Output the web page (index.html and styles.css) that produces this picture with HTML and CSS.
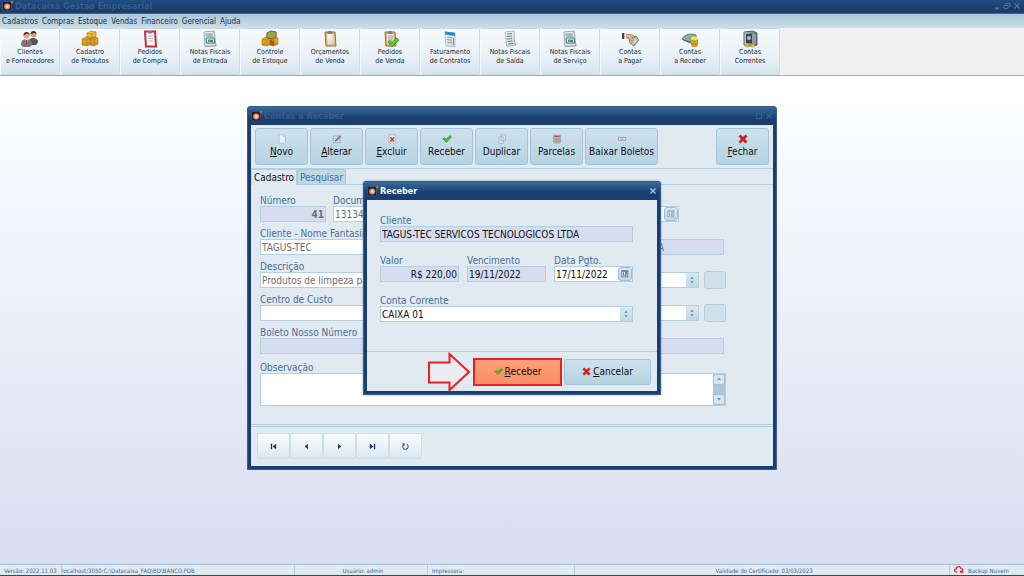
FILE: index.html
```html
<!DOCTYPE html>
<html lang="pt-BR">
<head>
<meta charset="utf-8">
<title>Datacaixa Gestão Empresarial</title>
<link rel="stylesheet" href="styles.css">
</head>
<body>
<svg class="defs" aria-hidden="true">
  <defs>
    <linearGradient id="gold" x1="0" y1="0" x2="0" y2="1"><stop offset="0" stop-color="#f6cf4e"/><stop offset="1" stop-color="#c98a12"/></linearGradient>
    <linearGradient id="paper" x1="0" y1="0" x2="1" y2="1"><stop offset="0" stop-color="#ffffff"/><stop offset="1" stop-color="#c3ccd2"/></linearGradient>
    <linearGradient id="steel" x1="0" y1="0" x2="1" y2="0"><stop offset="0" stop-color="#c2cdd2"/><stop offset="1" stop-color="#5c6a70"/></linearGradient>
    <symbol id="logo" viewBox="0 0 12 12"><rect x="0.500" y="1.500" width="9" height="9.500" rx="1" fill="#16233f" stroke="#35506f"/><circle cx="5.200" cy="6.500" r="3" fill="#f58a4a"/><circle cx="5.200" cy="6.500" r="1.500" fill="#ffe3cf"/><circle cx="10" cy="2" r="1.300" fill="#e2632c"/></symbol>
    <symbol id="check" viewBox="0 0 12 12"><path d="M1 6l2.500-1.500 1.500 1.700L9.500 2 11.500 3.500 5.300 10z" fill="#4fc320" stroke="#258a10" stroke-width=".8"/></symbol>
    <symbol id="cross" viewBox="0 0 12 12"><path d="M1 3l2-2 3 3 3-3 2 2-3 3 3 3-2 2-3-3-3 3-2-2 3-3z" fill="#d81f12" stroke="#a3130b" stroke-width=".5"/></symbol>
    <symbol id="boxes" viewBox="0 0 18 18"><path d="M6 3l4-2 5 1v5l-4 2-5-1zM1 9l4-2 5 1v6l-4 2-5-1zM9 9l4-2 4 1v6l-4 2-4-1z" fill="url(#gold)" stroke="#a8761a" stroke-width=".6"/><path d="M6 3l5 1 4-2M11 4v5M1 9l5 1 4-2M6 10v6M9 9l4 1 4-2M13 10v6" fill="none" stroke="#b88518" stroke-width=".7"/></symbol>
    <symbol id="invoice" viewBox="0 0 18 18"><path d="M3 2l10-1 2 15-11 .5z" fill="url(#paper)" stroke="#7e919b" stroke-width=".8"/><path d="M4.500 4h7M4.800 6h7" stroke="#71868f"/><path d="M5 8h8l.5 5H5.500z" fill="#fff" stroke="#40708c"/><path d="M6.500 9.500h5.500v2.500H7z" fill="#49a85f"/><path d="M9 11.500h3" stroke="#cf3d3d"/></symbol>
    <symbol id="clip" viewBox="0 0 18 18"><path d="M4 2h10l1 14H5z" fill="#e4b35c" stroke="#9d7129"/><path d="M6 4h6.500l.7 10.500H6.500z" fill="url(#paper)"/><path d="M7 1h4l.5 3h-5z" fill="#807e7a"/></symbol>
    <symbol id="updown" viewBox="0 0 8 10"><path d="M4 1l2 2.500H2zM4 9L2 6.500h4z" fill="#3e6791"/></symbol>
    <symbol id="calendar" viewBox="0 0 10 10"><rect x="1" y="1" width="7.500" height="7.500" fill="#e8eef4" stroke="#53748f"/><path d="M3 3v4M5 3h2v2H5v2h2M1 1.500h8" fill="none" stroke="#3b5878"/></symbol>
    <symbol id="close" viewBox="0 0 8 8"><path d="M1.500 1.500l5 5M6.500 1.500l-5 5" stroke="currentColor" stroke-width="1.300"/></symbol>
  </defs>
</svg>

<header class="app-title">
  <svg class="logo"><use href="#logo"/></svg>
  <h1>Datacaixa Gestão Empresarial</h1>
  <div class="win-controls">
    <button aria-label="Minimizar"><svg viewBox="0 0 8 8"><path d="M2 6.500h4" stroke="currentColor" stroke-width="2"/></svg></button>
    <button aria-label="Restaurar"><svg viewBox="0 0 8 8"><path d="M1 3.500h4v3H1zM3 3V1.500h4v3H5.500" fill="none" stroke="currentColor"/></svg></button>
    <button aria-label="Fechar aplicativo"><svg viewBox="0 0 8 8"><use href="#close"/></svg></button>
  </div>
</header>
<nav class="menu">
  <button>Cadastros</button><button>Compras</button><button>Estoque</button><button>Vendas</button><button>Financeiro</button><button>Gerencial</button><button>Ajuda</button>
</nav>
<div class="ribbon">
  <button><svg viewBox="0 0 18 18"><path d="M7 13c1-4 3-5 5-5s5 1 5 4l-2 3H8z" fill="#555"/><circle cx="12.500" cy="4.500" r="3" fill="#dc9c78"/><path d="M9.500 4c0-4 6-4 6 0l-2-1z" fill="#3a2e29"/><path d="M0 15c0-4 2-6 5.500-6s5.500 2 5.500 6l-2 2H2z" fill="#777"/><path d="M4.500 9l1 4 1.500-4z" fill="#fff"/><path d="M5.500 10v4" stroke="#c33"/><circle cx="5.500" cy="5.500" r="3" fill="#e2a582"/><path d="M2.500 5.500C2 1 9 1 8.500 5L6 3.500z" fill="#42332c"/></svg>Clientes<br>e Fornecedores</button>
  <button><svg><use href="#boxes"/></svg>Cadastro<br>de Produtos</button>
  <button><svg viewBox="0 0 18 18"><path d="M4 1.500h10l1 15H5z" fill="#fff" stroke="#c52c38" stroke-width="2"/><path d="M7 1h4v2.500H7z" fill="#777"/><path d="M7 6h5M7 8.500h5M7.500 11h4" stroke="#a9adb2"/></svg>Pedidos<br>de Compra</button>
  <button><svg><use href="#invoice"/></svg>Notas Fiscais<br>de Entrada</button>
  <button><svg viewBox="0 0 18 18"><use href="#boxes"/><path d="M6 3l4-2 5 1v5l-4 2-5-1z" fill="#a3a345" stroke="#70732c"/><path d="M9 10l4 1v5l-4-1z" fill="#bd4c20"/></svg>Controle<br>de Estoque</button>
  <button><svg><use href="#clip"/></svg>Orçamentos<br>de Venda</button>
  <button><svg viewBox="0 0 18 18"><use href="#clip"/><path d="M7 6h5M7 8h5M7 10h4" stroke="#989da0"/><path d="M7 12l2-1.500 2 2L15.500 8 18 10l-7 7z" fill="#5bcc27" stroke="#268616" stroke-width=".7"/></svg>Pedidos<br>de Venda</button>
  <button><svg viewBox="0 0 18 18"><path d="M4 2l10 1v14l-9-1z" fill="url(#paper)" stroke="#a4b2bb" stroke-width=".7"/><path d="M4 1.500l10 1.300V6L4 4.500z" fill="#278acb"/><path d="M6 7l5 .7M6 9.500l5 .7M6 12l5 .7M12.500 8v7" stroke="#8d9ca6"/></svg>Faturamento<br>de Contratos</button>
  <button><svg viewBox="0 0 18 18"><path d="M4 2l9-1c1 5-1 9 2 14l-9 1.500c-2-5 0-9-2-14.500z" fill="url(#paper)" stroke="#8fa1a5" stroke-width=".7"/><path d="M6 4l5-.5M6 6.500l5-.5M6 9l5-.5M6.500 11.500l5-.5M7 14l5-.5" stroke="#568579"/></svg>Notas Fiscais<br>de Saída</button>
  <button><svg><use href="#invoice"/></svg>Notas Fiscais<br>de Serviço</button>
  <button><svg viewBox="0 0 18 18"><path d="M8 8l7-2 3 4-5 6-4-3z" fill="#b1c0a5" stroke="#758a6c"/><circle cx="13" cy="10.500" r="2" fill="#e0e6d5"/><path d="M4 4l8 1 2 3-3-.5 2 3-2 1-3-3-4-1z" fill="#e3ac8c" stroke="#a66c52" stroke-width=".6"/><path d="M1 3h2.500v6H1z" fill="#444"/><path d="M3.500 3.500h1.500v5H3.500z" fill="#eee"/></svg>Contas<br>a Pagar</button>
  <button><svg viewBox="0 0 18 18"><path d="M1 9c3-5 9-6 14-4v6l-6 2z" fill="#8faa90" stroke="#5d7f6b"/><path d="M2 10l7 2 5-3" fill="none" stroke="#526f5d"/><path d="M10 8v7c0 2.500 7 2.500 7 0V8z" fill="url(#gold)"/><ellipse cx="13.500" cy="8" rx="3.500" ry="1.500" fill="#ffe25e"/><path d="M10 10.500q3.500 2 7 0M10 13q3.500 2 7 0" fill="none" stroke="#b98911"/></svg>Contas<br>a Receber</button>
  <button><svg viewBox="0 0 18 18"><path d="M3 2l9-1 4 2v12l-4 1.500L3 15z" fill="url(#steel)" stroke="#59666c"/><path d="M5 4l6-.5v10L5 13z" fill="#38454c"/><path d="M11 3.500l4 .5v10l-4-.5" fill="#8e9ca2"/><circle cx="8" cy="8" r="2" fill="#adbcc2"/><circle cx="6" cy="15.500" r="2" fill="#dca718"/><circle cx="12" cy="16" r="1.800" fill="#efc12e"/></svg>Contas<br>Correntes</button>
</div>

<main class="desktop">
  <section class="window" aria-label="Contas a Receber">
    <header class="win-title dim">
      <svg class="logo"><use href="#logo"/></svg>
      <h2>Contas a Receber</h2>
      <div class="win-controls">
        <button aria-label="Maximizar"><svg viewBox="0 0 8 8"><path d="M1.500 1.500h5v5h-5zM1 2h6" fill="none" stroke="currentColor"/></svg></button>
        <button aria-label="Fechar janela"><svg viewBox="0 0 8 8"><use href="#close"/></svg></button>
      </div>
    </header>
    <div class="win-body">
      <div class="actions">
        <button><svg viewBox="0 0 12 12"><path d="M2.500 1h5l2.500 2.500V11H2.500z" fill="#e6f2fd" stroke="#8eb6de" stroke-width=".8"/><path d="M7.500 1v2.500H10" fill="#a7cbed"/></svg><span><u>N</u>ovo</span></button>
        <button><svg viewBox="0 0 12 12"><path d="M1.500 2.500h8v8h-8z" fill="#dce9f8" stroke="#7592be" stroke-width=".8"/><path d="M3 5h4M3 8h5" stroke="#8da8cb"/><path d="M4 7.500L9.500 1.500 11 3 5.500 8.500z" fill="#a76c43"/><path d="M4 7.500L3.500 9l2-.5z" fill="#333"/></svg><span><u>A</u>lterar</span></button>
        <button><svg viewBox="0 0 12 12"><path d="M2.500 1h7.500v10H2.500z" fill="#eef2f9" stroke="#98a9c3" stroke-width=".8"/><path d="M4 4l4.500 5M8.500 4L4 9" stroke="#d0322e" stroke-width="1.800"/></svg><span><u>E</u>xcluir</span></button>
        <button><svg><use href="#check"/></svg><span>Receber</span></button>
        <button><svg viewBox="0 0 12 12"><path d="M5 1h5v7H5zM2.500 3.500h5V11h-5z" fill="#e5eaf0" stroke="#92a5b4" stroke-width=".8"/></svg><span>Duplicar</span></button>
        <button><svg viewBox="0 0 12 12"><path d="M2 1.500h8v9H2z" fill="#c0c0c0" stroke="#858a8f" stroke-width=".8"/><path d="M3 3h6" stroke="#cb4545" stroke-width="1.500"/><path d="M3 6h6M3 8.500h6" stroke="#8b7375"/></svg><span>Parcelas</span></button>
        <button class="wide"><svg viewBox="0 0 12 12"><rect x="2" y="4" width="8" height="3.500" fill="#f0f0f0" stroke="#8f9699"/><path d="M4 6h4" stroke="#777"/></svg><span>Baixar Boletos</span></button>
        <button class="last"><svg><use href="#cross"/></svg><span><u>F</u>echar</span></button>
      </div>
      <div class="tabs" role="tablist">
        <button role="tab" aria-selected="true" class="active">Cadastro</button><button role="tab" aria-selected="false">Pesquisar</button>
      </div>
      <form class="page">
        <div class="row top">
          <div class="field num"><label for="numero">Número</label><input id="numero" class="ro bold right" value="41" readonly></div>
          <div class="field doc"><label for="documento">Documento</label><input id="documento" value="13134-1"></div>
          <div class="field grow"><label for="emissao">Data</label><div class="combo"><input id="emissao"><button type="button" class="cal" aria-label="Abrir calendário"><svg><use href="#calendar"/></svg></button></div></div>
        </div>
        <div class="row client">
          <div class="field fantasy"><label for="fantasia">Cliente - Nome Fantasia</label><input id="fantasia" value="TAGUS-TEC"></div>
          <div class="field grow"><label for="razao">Cliente</label><input id="razao" class="ro" value="TAGUS-TEC SERVICOS TECNOLOGICOS LTDA" readonly></div>
        </div>
        <div class="row end">
          <div class="field grow"><label for="descricao">Descrição</label><div class="combo"><input id="descricao" value="Produtos de limpeza para o escritório"><button type="button" class="spin" aria-label="Abrir lista"><svg><use href="#updown"/></svg></button></div></div>
          <button type="button" class="extra" aria-label="Cadastrar descrição"></button>
        </div>
        <div class="row end">
          <div class="field grow"><label for="custo">Centro de Custo</label><div class="combo"><select id="custo"><option></option></select><span class="spin"><svg><use href="#updown"/></svg></span></div></div>
          <button type="button" class="extra" aria-label="Cadastrar centro de custo"></button>
        </div>
        <div class="row client"><div class="field grow"><label for="boleto">Boleto Nosso Número</label><input id="boleto" class="ro" readonly></div></div>
        <div class="field notes"><label for="obs">Observação</label>
          <div class="memo"><textarea id="obs"></textarea><div class="scroll"><span><svg viewBox="0 0 8 8"><path d="M4 2.500L6 5H2z" fill="#7293b2"/></svg></span><span><svg viewBox="0 0 8 8"><path d="M4 5.500L2 3h4z" fill="#7293b2"/></svg></span></div></div>
        </div>
      </form>
      <div class="navigator">
        <button aria-label="Primeiro"><svg viewBox="0 0 10 10"><path d="M2 2h1.500v6H2zM8 2v6L4 5z" fill="#17375f"/></svg></button>
        <button aria-label="Anterior"><svg viewBox="0 0 10 10"><path d="M6.500 2v6L3 5z" fill="#17375f"/></svg></button>
        <button aria-label="Próximo"><svg viewBox="0 0 10 10"><path d="M3.500 2v6L7 5z" fill="#17375f"/></svg></button>
        <button aria-label="Último"><svg viewBox="0 0 10 10"><path d="M8 2H6.500v6H8zM2 2v6l4-3z" fill="#17375f"/></svg></button>
        <button aria-label="Atualizar"><svg viewBox="0 0 10 10"><path d="M6.500 2.500A3 3 0 1 1 3 2.800M1.500 2h2v2" fill="none" stroke="#32608a" stroke-width="1.200"/></svg></button>
      </div>
    </div>
  </section>

  <section class="window modal" role="dialog" aria-label="Receber">
    <header class="win-title">
      <svg class="logo"><use href="#logo"/></svg>
      <h2>Receber</h2>
      <div class="win-controls"><button aria-label="Fechar diálogo"><svg viewBox="0 0 8 8"><use href="#close"/></svg></button></div>
    </header>
    <div class="win-body">
      <form class="pay">
        <div class="field"><label for="m-cliente">Cliente</label><input id="m-cliente" class="ro" value="TAGUS-TEC SERVICOS TECNOLOGICOS LTDA" readonly></div>
        <div class="thirds">
          <div class="field"><label for="valor">Valor</label><input id="valor" class="ro right" value="R$ 220,00" readonly></div>
          <div class="field"><label for="venc">Vencimento</label><input id="venc" class="ro" value="19/11/2022" readonly></div>
          <div class="field"><label for="pgto">Data Pgto.</label><div class="combo"><input id="pgto" value="17/11/2022"><button type="button" class="cal" aria-label="Escolher data"><svg><use href="#calendar"/></svg></button></div></div>
        </div>
        <div class="field"><label for="conta">Conta Corrente</label><div class="combo"><select id="conta"><option>CAIXA 01</option></select><span class="spin"><svg><use href="#updown"/></svg></span></div></div>
      </form>
      <footer class="confirm">
        <svg class="arrow" viewBox="0 0 44 40"><path d="M2 10.500h20.500V2L42 20 22.500 38V30.500H2z" fill="#e9edf2" stroke="#ee1c25" stroke-width="2"/></svg>
        <button class="primary"><svg><use href="#check"/></svg><span><u>R</u>eceber</span></button>
        <button><svg><use href="#cross"/></svg><span><u>C</u>ancelar</span></button>
      </footer>
    </div>
  </section>
</main>

<footer class="status">
  <span>Versão: 2022.11.03</span>
  <span class="path">localhost/3050:C:\Datacaixa_FAQ\BD\BANCO.FDB</span>
  <span class="center">Usuário: admin</span>
  <span>Impressora:</span>
  <span class="center">Validade do Certificado: 03/03/2023</span>
  <span class="cloud"><svg viewBox="0 0 12 10"><path d="M4 8H3C0 8 0 4.500 2.500 4.500 3 .5 8 .5 8.500 4 11 4 11 6 10 7" fill="none" stroke="#d32c36" stroke-width="1.500"/><path d="M7 6.500h4V9H7z" fill="#d32c36"/></svg>Backup Nuvem</span>
</footer>
</body>
</html>
```
FILE: styles.css
```css
* { box-sizing: border-box; }
:root {
  --navy: #1b3e70;
  --panel: #e1e9f1;
  --line: #b4cfe2;
  --label: #486f96;
}
body {
  margin: 0;
  min-height: 100vh;
  display: flex;
  flex-direction: column;
  font-family: "DejaVu Sans Condensed", "DejaVu Sans", sans-serif;
  font-stretch: condensed;
  font-size: 10px;
  color: #111;
  background: linear-gradient(#fff 76px, #fbfcff 120px, #d8dcf0);
}
button, input, select, textarea { font: inherit; color: inherit; margin: 0; padding: 0; border: 0; border-radius: 0; background: none; }
button { white-space: nowrap; }
h1, h2 { margin: 0; font-weight: bold; }
svg { display: block; flex: none; }
u { text-underline-offset: 1px; }
.defs { position: absolute; width: 0; height: 0; }
.logo { width: 12px; height: 12px; }

.app-title {
  display: flex;
  align-items: center;
  gap: 1px;
  height: 14px;
  padding: 0 3px 1px 2px;
  background: linear-gradient(#205083, #1c3e72 50%, #1b3b6b);
  border-bottom: 1px solid #3c648c;
  color: #315e8d;
}
.app-title h1 { flex: 1; font-size: 9px; }
.win-controls { display: flex; gap: 2px; color: #4a719c; }
.win-controls button, .win-controls svg { width: 8px; height: 8px; }

.menu {
  display: flex;
  gap: 4px;
  height: 14px;
  padding: 0 2px;
  align-items: center;
  font-size: 8px;
  color: #1d2f40;
  background: linear-gradient(#aac5da, #cbdee9);
}

.ribbon {
  display: flex;
  height: 48px;
  background: #f0f0f0;
  border-bottom: 1px solid #a9abad;
}
.ribbon button {
  flex: 0 0 60px;
  padding-bottom: 8px;
  font-size: 7px;
  line-height: 9px;
  color: #222c35;
  border: 1px solid #c8dce7;
  border-left-color: #f4fafc;
  border-radius: 2px;
  background: linear-gradient(#f8fafc, #e8f0f5 65%, #d6e6ee);
}
.ribbon svg { width: 18px; height: 18px; margin: 0 auto; }

.desktop { flex: 1; }
.window {
  position: fixed;
  inset: 0;
  margin: auto;
  width: 530px;
  height: fit-content;
  background: var(--navy);
  border: 1px solid #365f8b;
  border-radius: 3px 3px 0 0;
  padding: 0 3px 3px;
}
.modal { width: 298px; box-shadow: 0 0 2px #6886a2; }
.win-title {
  display: flex;
  align-items: center;
  gap: 1px;
  height: 18px;
  margin: 0 -3px;
  padding: 0 3px;
  color: #fff;
  background: linear-gradient(#386a97, #234f80 40%, #193d70 60%, #1b3e70);
}
.win-title h2 { flex: 1; font-size: 9px; }
.win-title .win-controls { color: #a5c5e2; }
.win-title.dim, .win-title.dim .win-controls { color: #345f8d; }
.win-body { background: var(--panel); }

.actions {
  display: flex;
  gap: 2px;
  padding: 3px 4px;
  border-bottom: 1px solid var(--line);
}
.actions button, .confirm button {
  border: 1px solid #a3c3d9;
  border-radius: 3px;
  background: linear-gradient(#cfe1ec, #b6d2e2);
}
.actions button {
  display: flex;
  flex-direction: column;
  align-items: center;
  gap: 2px;
  width: 53px;
  height: 37px;
  padding-top: 5px;
}
.actions .wide { width: 73px; }
.actions .last { margin-left: auto; }
.actions svg { width: 10px; height: 10px; }

.tabs { display: flex; height: 16px; border-bottom: 1px solid var(--line); }
.tabs button {
  height: 16px;
  width: 49px;
  color: #42719c;
  background: #bfd7e6;
  border: 1px solid #a9c8dd;
  border-radius: 2px 2px 0 0;
}
.tabs .active { width: 46px; color: #111; background: var(--panel); border-color: var(--line); border-bottom: 0; }

.page { padding: 8px 47px 18px 9px; border-bottom: 3px double var(--line); color: #6d7073; }
.row { display: flex; gap: 5px; margin-bottom: 4px; }
.row.top { gap: 7px; padding-right: 47px; }
.row.client { gap: 6px; padding-right: 2px; }
.row.end { align-items: flex-end; }
.field { display: flex; flex-direction: column; min-width: 0; }
.field label { height: 13px; line-height: 15px; color: var(--label); white-space: nowrap; }
.grow { flex: 1; }
.num { width: 66px; }
.doc { width: 76px; }
.fantasy { width: 199px; }
.field input, .field select {
  height: 16px;
  width: 100%;
  min-width: 0;
  padding: 0 1px;
  background: #fff;
  border: 1px solid var(--line);
}
.field select { appearance: none; }
.field .ro { background: #d7ddf0; }
.right { text-align: right; }
.bold { font-weight: bold; }
.combo { display: flex; height: 16px; background: #fff; border: 1px solid var(--line); }
.field .combo input, .field .combo select { height: 14px; border: 0; }
.spin, .cal {
  flex: none;
  display: flex;
  align-items: center;
  justify-content: center;
  width: 12px;
  background: linear-gradient(#dae8f0, #c0d7e5);
}
.cal { width: 14px; border: 1px solid #9ebfd6; border-radius: 3px; }
.spin svg { width: 8px; height: 8px; opacity: .8; }
.cal svg { width: 8px; height: 8px; }
.page .cal svg { opacity: .5; }
.extra { width: 22px; height: 18px; border: 1px solid #b3cddd; border-radius: 3px; background: #d0e1eb; margin-bottom: -1px; }
.notes { padding-top: 2px; }
.memo { display: flex; height: 33px; background: #fff; border: 1px solid var(--line); }
.memo textarea { flex: 1; resize: none; outline: 0; }
.scroll { display: flex; flex-direction: column; justify-content: space-between; width: 12px; background: #abc6d7; }
.scroll span { border: 1px solid #a5c2d5; border-radius: 2px; background: #d6e5ee; height: 11px; }
.scroll svg { width: 8px; height: 8px; margin: 0 auto; }

.navigator { display: flex; padding: 6px 6px 7px; }
.navigator button {
  display: flex;
  align-items: center;
  justify-content: center;
  width: 33px;
  height: 26px;
  border: 1px solid #cbdfe9;
  border-radius: 2px;
  background: linear-gradient(#f7fafc, #e9f1f6 60%, #d7e7ef);
}
.navigator svg { width: 9px; height: 9px; }

.pay { display: flex; flex-direction: column; gap: 11px; padding: 13px 24px 29px 13px; }
.thirds { display: grid; grid-template-columns: repeat(3, 1fr); gap: 8px; }
.confirm {
  display: flex;
  justify-content: flex-end;
  align-items: center;
  gap: 2px;
  height: 40px;
  padding-right: 6px;
  border-top: 1px solid var(--line);
}
.arrow { width: 44px; height: 40px; }
.confirm button {
  display: flex;
  align-items: center;
  justify-content: center;
  gap: 2px;
  width: 87px;
  height: 26px;
}
.confirm button svg { width: 9px; height: 9px; }
.confirm .primary { width: 89px; height: 28px; border: 2px solid #ee1c25; border-radius: 0; background: linear-gradient(#ffa17c, #f98d63); }

.status {
  display: grid;
  grid-template-columns: 62px 233px 133px 147px 375px 1fr;
  height: 12px;
  font-size: 6px;
  line-height: 11px;
  color: #41698f;
  background: var(--panel);
  border-top: 1px solid #a4c0d8;
  border-bottom: 1px solid #444;
}
.status span { padding-left: 4px; border-right: 1px solid var(--line); white-space: nowrap; overflow: hidden; }
.status .path { padding-left: 0; }
.status .center { text-align: center; }
.status .cloud { display: flex; gap: 4px; border-right: 0; }
.status .cloud svg { width: 10px; height: 9px; }
```
